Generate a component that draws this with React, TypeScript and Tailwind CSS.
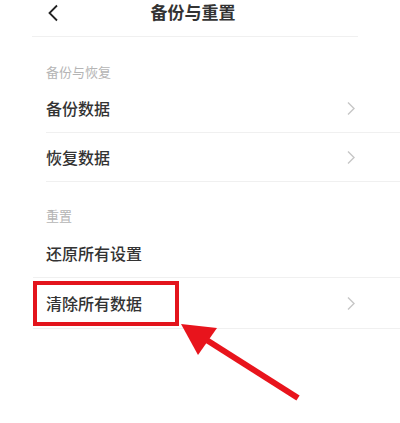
const font = { fontFamily: '"Noto Sans CJK SC", "Noto Sans", sans-serif' };

function Chevron() {
  return (
    <svg width="10" height="15" viewBox="0 0 10 15" className="shrink-0">
      <polyline points="2,1.5 8,7.5 2,13.5" fill="none" stroke="#c6c6c6" strokeWidth="1.4" />
    </svg>
  );
}

function Row({ label }: { label: string }) {
  return (
    <div className="flex items-center justify-between h-[49px] pr-[44px] border-b border-[#f0f0f0]">
      <span className="text-[16px] font-medium text-[#333] leading-none">{label}</span>
      <Chevron />
    </div>
  );
}

export default function App() {
  return (
    <div className="relative w-[400px] h-[423px] bg-white overflow-hidden" style={font}>
      {/* header */}
      <div className="ml-[32px] w-[326px] h-[37px] border-b border-[#f0f0f0] flex items-start relative">
        <svg width="14" height="18" viewBox="0 0 14 18" className="absolute left-[14px] top-[4px]">
          <polyline points="11,1.5 3.5,9 11,16.5" fill="none" stroke="#222" strokeWidth="1.8" />
        </svg>
        <div className="flex-1 text-center pr-[4px] pt-[1px] text-[17px] font-bold text-[#333] leading-[22px]">备份与重置</div>
      </div>

      <div className="ml-[46px] pt-[27px] pb-[4px] text-[13px] text-[#b5b5b5] leading-[16px]">备份与恢复</div>
      <div className="ml-[46px]">
        <Row label="备份数据" />
        <Row label="恢复数据" />
      </div>

      <div className="ml-[46px] pt-[26px] pb-[5px] text-[13px] text-[#b5b5b5] leading-[16px]">重置</div>
      <div className="ml-[33px]">
        <div className="flex items-center h-[49px] pl-[13px] pr-[44px] border-b border-[#f0f0f0]">
          <span className="text-[16px] font-medium text-[#333] leading-none">还原所有设置</span>
        </div>
        <div className="flex items-center justify-between h-[51px] pr-[44px] border-b border-[#f0f0f0]">
          <div className="w-[146px] h-[45px] border-[4px] border-[#e3141c] flex items-center pl-[9px]">
            <span className="text-[16px] font-medium text-[#333] leading-none">清除所有数据</span>
          </div>
          <Chevron />
        </div>
      </div>

      {/* annotation arrow */}
      <svg className="absolute left-0 top-0 pointer-events-none" width="400" height="423">
        <line x1="298" y1="398" x2="205" y2="339" stroke="#e8141c" strokeWidth="6" />
        <polygon points="181,324 217,328 198,355" fill="#e8141c" />
      </svg>
    </div>
  );
}
